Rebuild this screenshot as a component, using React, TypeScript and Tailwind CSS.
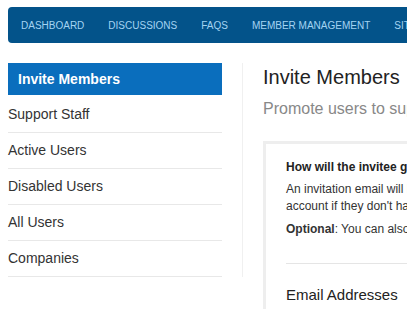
const NAV = ['Dashboard', 'Discussions', 'FAQs', 'Member Management', 'Site Settings'];
const SIDE = ['Invite Members', 'Support Staff', 'Active Users', 'Disabled Users', 'All Users', 'Companies'];

export default function App() {
  return (
    <div className="w-[407px] h-[309px] overflow-hidden bg-white font-['Liberation_Sans',Arial,sans-serif] text-[#333]">
      {/* Top nav */}
      <div className="ml-2 mt-[7px] w-[600px] h-[36px] rounded-l-[4px] bg-[#03538a] flex items-center pl-[1px]">
        {NAV.map((item) => (
          <div key={item} className="px-[12px] text-[10px] uppercase text-[#a3d3f2] whitespace-nowrap">
            {item}
          </div>
        ))}
      </div>

      <div className="flex mt-5">
        {/* Sidebar */}
        <div className="w-[243px] shrink-0 pl-2 pr-[20px] border-r border-[#f0f0f0] h-[214px]">
          {SIDE.map((item, i) =>
            i === 0 ? (
              <div key={item} className="h-[32px] mb-[2px] bg-[#0a6ebd] flex items-center pl-[10px] text-[14px] font-bold text-white">
                {item}
              </div>
            ) : (
              <div key={item} className="h-[36px] flex items-center text-[14px] border-b border-[#e8e8e8]">
                {item}
              </div>
            )
          )}
        </div>

        {/* Main */}
        <div className="pl-5 w-[400px] shrink-0">
          <h1 className="text-[20px] leading-[28px] text-[#222] whitespace-nowrap">Invite Members</h1>
          <p className="mt-[8px] text-[16px] leading-[20px] text-[#888] whitespace-nowrap">
            Promote users to support staff or invite new members
          </p>
          <div className="mt-[22px] border-[3px] border-[#eeeeee] pt-[15px] px-5 pb-4 w-[300px]">
            <p className="text-[12px] leading-[17px] font-bold text-[#222] whitespace-nowrap">How will the invitee gain access?</p>
            <p className="mt-[5px] text-[12px] leading-[17px] text-[#333] whitespace-nowrap">
              An invitation email will be sent with a link to create an
              <br />
              account if they don't have one already.
            </p>
            <p className="mt-[6px] text-[12px] leading-[17px] text-[#333] whitespace-nowrap">
              <span className="font-bold">Optional</span>: You can also add them to a company.
            </p>
            <div className="mt-[25px] border-t border-[#e5e5e5]" />
            <div className="mt-[20px] text-[15px] text-[#222] whitespace-nowrap">Email Addresses</div>
          </div>
        </div>
      </div>
    </div>
  );
}
